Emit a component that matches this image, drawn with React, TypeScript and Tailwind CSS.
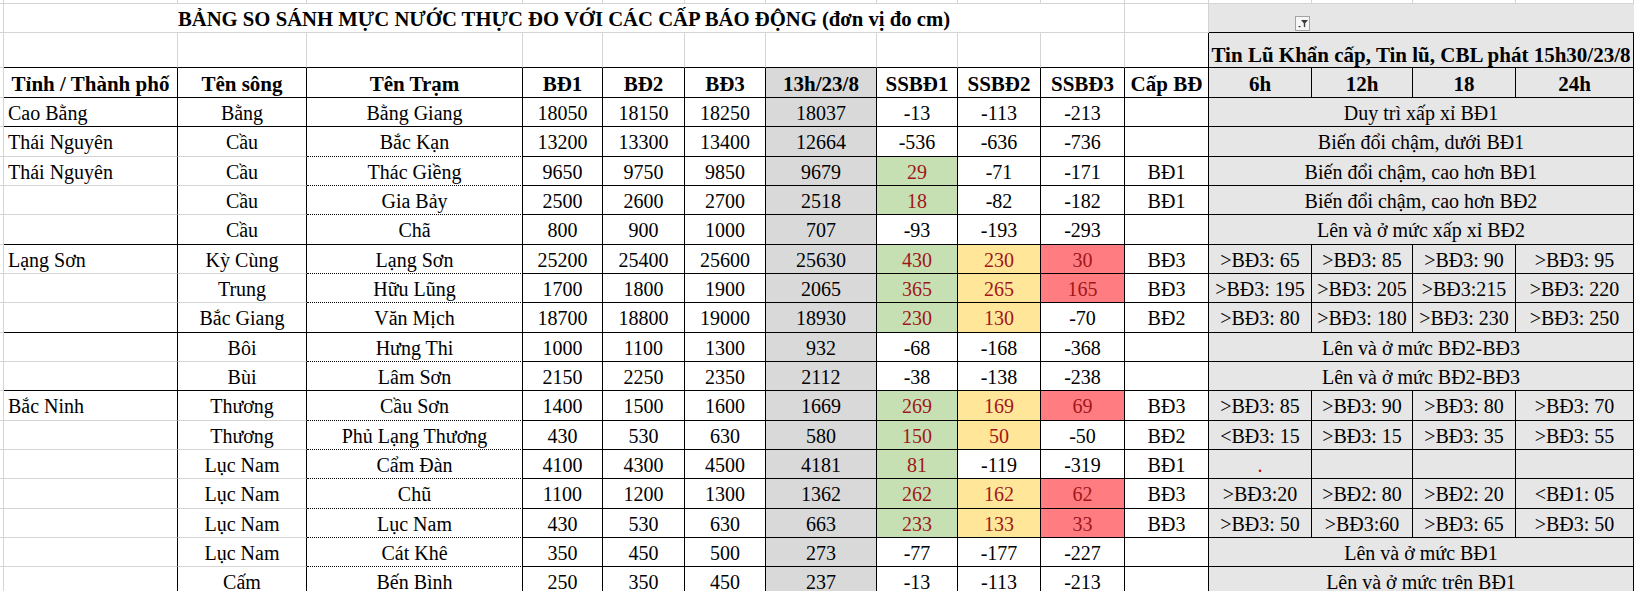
import React from "react";

type Row = {
    tinh: string;
    song: string;
    tram: string;
    bd: [number, number, number];
    now: number;
    ss: [number, number, number];
    cap: string;
    forecast: string | string[];
    start?: boolean;
};

const rows: Row[] = [
    { tinh: "Cao Bằng", song: "Bằng", tram: "Bằng Giang", bd: [18050, 18150, 18250], now: 18037, ss: [-13, -113, -213], cap: "", forecast: "Duy trì xấp xỉ BĐ1", start: true },
    { tinh: "Thái Nguyên", song: "Cầu", tram: "Bắc Kạn", bd: [13200, 13300, 13400], now: 12664, ss: [-536, -636, -736], cap: "", forecast: "Biến đổi chậm, dưới BĐ1", start: true },
    { tinh: "Thái Nguyên", song: "Cầu", tram: "Thác Giềng", bd: [9650, 9750, 9850], now: 9679, ss: [29, -71, -171], cap: "BĐ1", forecast: "Biến đổi chậm, cao hơn BĐ1" },
    { tinh: "", song: "Cầu", tram: "Gia Bảy", bd: [2500, 2600, 2700], now: 2518, ss: [18, -82, -182], cap: "BĐ1", forecast: "Biến đổi chậm, cao hơn BĐ2" },
    { tinh: "", song: "Cầu", tram: "Chã", bd: [800, 900, 1000], now: 707, ss: [-93, -193, -293], cap: "", forecast: "Lên và ở mức xấp xỉ BĐ2" },
    { tinh: "Lạng Sơn", song: "Kỳ Cùng", tram: "Lạng Sơn", bd: [25200, 25400, 25600], now: 25630, ss: [430, 230, 30], cap: "BĐ3", forecast: [">BĐ3: 65", ">BĐ3: 85", ">BĐ3: 90", ">BĐ3: 95"], start: true },
    { tinh: "", song: "Trung", tram: "Hữu Lũng", bd: [1700, 1800, 1900], now: 2065, ss: [365, 265, 165], cap: "BĐ3", forecast: [">BĐ3: 195", ">BĐ3: 205", ">BĐ3:215", ">BĐ3: 220"] },
    { tinh: "", song: "Bắc Giang", tram: "Văn Mịch", bd: [18700, 18800, 19000], now: 18930, ss: [230, 130, -70], cap: "BĐ2", forecast: [">BĐ3: 80", ">BĐ3: 180", ">BĐ3: 230", ">BĐ3: 250"] },
    { tinh: "", song: "Bôi", tram: "Hưng Thi", bd: [1000, 1100, 1300], now: 932, ss: [-68, -168, -368], cap: "", forecast: "Lên và ở mức BĐ2-BĐ3", start: true },
    { tinh: "", song: "Bùi", tram: "Lâm Sơn", bd: [2150, 2250, 2350], now: 2112, ss: [-38, -138, -238], cap: "", forecast: "Lên và ở mức BĐ2-BĐ3" },
    { tinh: "Bắc Ninh", song: "Thương", tram: "Cầu Sơn", bd: [1400, 1500, 1600], now: 1669, ss: [269, 169, 69], cap: "BĐ3", forecast: [">BĐ3: 85", ">BĐ3: 90", ">BĐ3: 80", ">BĐ3: 70"], start: true },
    { tinh: "", song: "Thương", tram: "Phủ Lạng Thương", bd: [430, 530, 630], now: 580, ss: [150, 50, -50], cap: "BĐ2", forecast: ["<BĐ3: 15", ">BĐ3: 15", ">BĐ3: 35", ">BĐ3: 55"] },
    { tinh: "", song: "Lục Nam", tram: "Cẩm Đàn", bd: [4100, 4300, 4500], now: 4181, ss: [81, -119, -319], cap: "BĐ1", forecast: [".", "", "", ""] },
    { tinh: "", song: "Lục Nam", tram: "Chũ", bd: [1100, 1200, 1300], now: 1362, ss: [262, 162, 62], cap: "BĐ3", forecast: [">BĐ3:20", ">BĐ2: 80", ">BĐ2: 20", "<BĐ1: 05"] },
    { tinh: "", song: "Lục Nam", tram: "Lục Nam", bd: [430, 530, 630], now: 663, ss: [233, 133, 33], cap: "BĐ3", forecast: [">BĐ3: 50", ">BĐ3:60", ">BĐ3: 65", ">BĐ3: 50"] },
    { tinh: "", song: "Lục Nam", tram: "Cát Khê", bd: [350, 450, 500], now: 273, ss: [-77, -177, -227], cap: "", forecast: "Lên và ở mức BĐ1" },
    { tinh: "", song: "Cấm", tram: "Bến Bình", bd: [250, 350, 450], now: 237, ss: [-13, -113, -213], cap: "", forecast: "Lên và ở mức trên BĐ1" },
];

const ssColor = [
    "bg-[#c6e0b4] text-[#a0171a]",
    "bg-[#ffe699] text-[#a0171a]",
    "bg-[#ff7c80] text-[#a0171a]",
];

function FilterButton() {
    return (
        <svg width="15" height="15" viewBox="0 0 15 15" className="inline-block align-bottom">
            <rect x="0.5" y="0.5" width="14" height="14" fill="#f6f6f6" stroke="#a3a3a3" />
            <path d="M6 4h7l-2.8 3.2v4.4l-1.4-1V7.2z" fill="#3a3a3a" />
            <path d="M3 10h3l-1.5 1.5z" fill="#3a3a3a" />
        </svg>
    );
}

// one data line: ~28.3px of content + 1px bottom border, like a 22pt sheet row
function Line({ children, className = "" }: { children?: React.ReactNode; className?: string }) {
    return <div className={`h-[28.33px] pt-[1px] leading-[28px] whitespace-nowrap ${className}`}>{children}</div>;
}

function Head({ children }: { children?: React.ReactNode }) {
    return <div className="h-[29px] pt-[2px] leading-[29px] whitespace-nowrap">{children}</div>;
}

export default function App() {
    const grid = "border-r border-b border-[#d4d4d4] p-0";
    const head = "border-r border-b border-black font-bold text-center text-[21px] p-0";
    const num = "border-r border-b border-black text-center p-0";

    return (
        <div className="w-[1634px] h-[591px] overflow-hidden bg-white text-black font-['Liberation_Serif','Times_New_Roman',serif] text-[20px]">
            <table className="table-fixed border-separate border-spacing-0 w-[1634px]">
                <colgroup>
                    <col className="w-[4px]" />
                    <col className="w-[174px]" />
                    <col className="w-[129px]" />
                    <col className="w-[216px]" />
                    <col className="w-[80px]" />
                    <col className="w-[82px]" />
                    <col className="w-[81px]" />
                    <col className="w-[111px]" />
                    <col className="w-[81px]" />
                    <col className="w-[83px]" />
                    <col className="w-[84px]" />
                    <col className="w-[84px]" />
                    <col className="w-[103px]" />
                    <col className="w-[101px]" />
                    <col className="w-[103px]" />
                    <col className="w-[118px]" />
                </colgroup>
                <tbody>
                    {/* sliver of the sheet row above */}
                    <tr>
                        {Array.from({ length: 16 }).map((_, i) => (
                            <td key={i} className={grid}>
                                <div className="h-[3px]" />
                            </td>
                        ))}
                    </tr>

                    {/* title row */}
                    <tr>
                        <td className={grid}>
                            <div className="h-[28px]" />
                        </td>
                        <td colSpan={10} className={`${grid} text-center font-bold text-[20.7px]`}>
                            <div className="h-[28px] pt-[1px] leading-[28px] whitespace-nowrap">
                                BẢNG SO SÁNH MỰC NƯỚC THỰC ĐO VỚI CÁC CẤP BÁO ĐỘNG (đơn vị đo cm)
                            </div>
                        </td>
                        <td className={grid}>
                            <div className="h-[28px]" />
                        </td>
                        <td className="border-b border-black bg-[#e7e6e6] p-0">
                            <div className="h-[28px] pr-[2px] pb-[1px] flex items-end justify-end">
                                <FilterButton />
                            </div>
                        </td>
                        <td colSpan={3} className="border-b border-black bg-[#e7e6e6] p-0">
                            <div className="h-[28px]" />
                        </td>
                    </tr>

                    {/* subtitle row */}
                    <tr>
                        <td className={grid}>
                            <div className="h-[34px]" />
                        </td>
                        {Array.from({ length: 10 }).map((_, i) => (
                            <td key={i} className="border-r border-r-[#d4d4d4] border-b border-b-black p-0">
                                <div className="h-[34px]" />
                            </td>
                        ))}
                        <td className="border-r border-r-black border-b border-b-black p-0">
                            <div className="h-[34px]" />
                        </td>
                        <td colSpan={4} className="border-r border-b border-black bg-[#e7e6e6] p-0 text-center font-bold text-[21px]">
                            <div className="h-[34px] pt-[11px] leading-[23px] whitespace-nowrap">
                                Tin Lũ Khẩn cấp, Tin lũ, CBL phát 15h30/23/8
                            </div>
                        </td>
                    </tr>

                    {/* column headers */}
                    <tr>
                        <td className={grid}>
                            <div className="h-[29px]" />
                        </td>
                        <td className={head}><Head>Tỉnh / Thành phố</Head></td>
                        <td className={head}><Head>Tên sông</Head></td>
                        <td className={head}><Head>Tên Trạm</Head></td>
                        <td className={head}><Head>BĐ1</Head></td>
                        <td className={head}><Head>BĐ2</Head></td>
                        <td className={head}><Head>BĐ3</Head></td>
                        <td className={`${head} bg-[#d9d9d9]`}><Head>13h/23/8</Head></td>
                        <td className={head}><Head>SSBĐ1</Head></td>
                        <td className={head}><Head>SSBĐ2</Head></td>
                        <td className={head}><Head>SSBĐ3</Head></td>
                        <td className={head}><Head>Cấp BĐ</Head></td>
                        <td className={`${head} bg-[#e7e6e6]`}><Head>6h</Head></td>
                        <td className={`${head} bg-[#e7e6e6]`}><Head>12h</Head></td>
                        <td className={`${head} bg-[#e7e6e6]`}><Head>18</Head></td>
                        <td className={`${head} bg-[#e7e6e6]`}><Head>24h</Head></td>
                    </tr>

                    {rows.map((r, i) => {
                        const groupEnd = i === rows.length - 1 || !!rows[i + 1].start;
                        const side = groupEnd
                            ? "border-r border-b border-black p-0"
                            : "border-r border-b border-r-black border-b-[#d4d4d4] p-0";
                        const station = groupEnd
                            ? "border-r border-b border-black p-0 text-center"
                            : "border-r border-b border-black [border-bottom-style:dotted] p-0 text-center";
                        return (
                            <tr key={i}>
                                <td className={grid}><Line /></td>
                                <td className={`${side} text-left`}><Line className="pl-[4px]">{r.tinh}</Line></td>
                                <td className={`${side} text-center`}><Line>{r.song}</Line></td>
                                <td className={station}><Line>{r.tram}</Line></td>
                                {r.bd.map((v, j) => (
                                    <td key={j} className={num}><Line>{v}</Line></td>
                                ))}
                                <td className={`${num} bg-[#d9d9d9]`}><Line>{r.now}</Line></td>
                                {r.ss.map((v, j) => (
                                    <td key={j} className={`${num} ${v > 0 ? ssColor[j] : ""}`}><Line>{v}</Line></td>
                                ))}
                                <td className={num}><Line>{r.cap}</Line></td>
                                {typeof r.forecast === "string" ? (
                                    <td colSpan={4} className={`${num} bg-[#e7e6e6]`}><Line>{r.forecast}</Line></td>
                                ) : (
                                    r.forecast.map((f, j) => (
                                        <td key={j} className={`${num} bg-[#e7e6e6] ${f === "." ? "text-[#c00000]" : ""}`}><Line>{f}</Line></td>
                                    ))
                                )}
                            </tr>
                        );
                    })}
                </tbody>
            </table>
        </div>
    );
}
